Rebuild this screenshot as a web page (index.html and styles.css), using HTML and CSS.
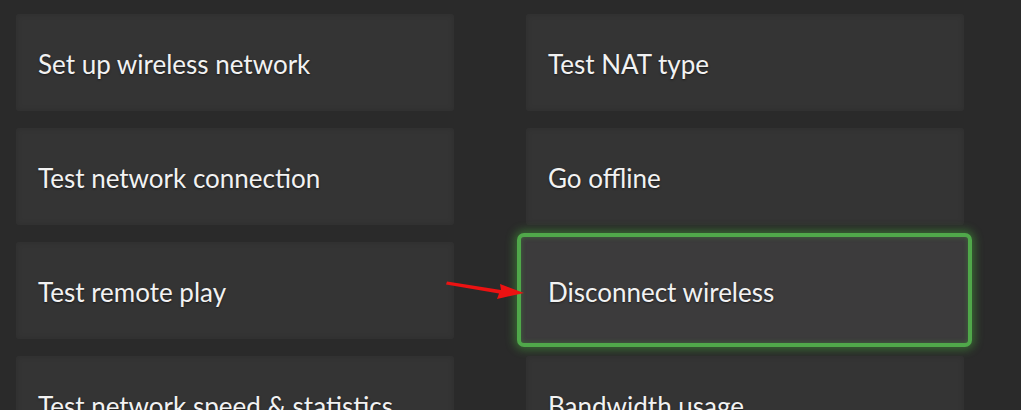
FILE: index.html
```html
<!DOCTYPE html>
<html>
<head>
<meta charset="utf-8">
<link rel="stylesheet" href="styles.css">
</head>
<body>
<div class="grid">
  <div class="tile"><span class="label">Set up wireless network</span></div>
  <div class="tile"><span class="label">Test NAT type</span></div>
  <div class="tile"><span class="label">Test network connection</span></div>
  <div class="tile"><span class="label">Go offline</span></div>
  <div class="tile"><span class="label">Test remote play</span></div>
  <div class="tile focused"><span class="label">Disconnect wireless</span></div>
  <div class="tile"><span class="label">Test network speed &amp; statistics</span></div>
  <div class="tile"><span class="label">Bandwidth usage</span></div>
</div>
<svg class="arrow" width="90" height="30" viewBox="0 0 90 30">
  <polygon points="2,2.5 56,11 55,5 79,14 52,20 54,14.5 1,5.5" fill="#ec1212"/>
</svg>
</body>
</html>
```
FILE: styles.css
```css
html, body {
  margin: 0;
  padding: 0;
  background: #2a2a2a;
  width: 1021px;
  height: 410px;
  overflow: hidden;
}
body {
  position: relative;
  font-family: "Lato", "Open Sans", sans-serif;
}
.grid {
  display: grid;
  grid-template-columns: 438px 438px;
  grid-auto-rows: 97px;
  column-gap: 72px;
  row-gap: 17px;
  padding: 14px 0 0 16px;
}
.tile {
  position: relative;
  background: #343434;
  border-radius: 2px;
  display: flex;
  align-items: center;
  padding: 3px 0 0 22px;
  box-sizing: border-box;
  box-shadow: inset 0 0 6px rgba(0,0,0,0.12);
}
.label {
  color: #f2f2f2;
  font-size: 26px;
  letter-spacing: 0;
  text-shadow: 0 1px 2px rgba(0,0,0,0.5);
  position: relative;
  z-index: 1;
}
.focused {
  background: #3c3b3c;
  box-shadow: none;
}
.focused::before {
  content: "";
  position: absolute;
  left: -9px;
  right: -8px;
  top: -9px;
  bottom: -8px;
  border: 4px solid #50a84a;
  border-radius: 7px;
  background: #3c3b3c;
  box-shadow: 0 0 8px 3px rgba(70,170,60,0.45), inset 0 0 5px rgba(70,170,60,0.4);
}
.arrow {
  position: absolute;
  left: 445px;
  top: 279px;
}
```
